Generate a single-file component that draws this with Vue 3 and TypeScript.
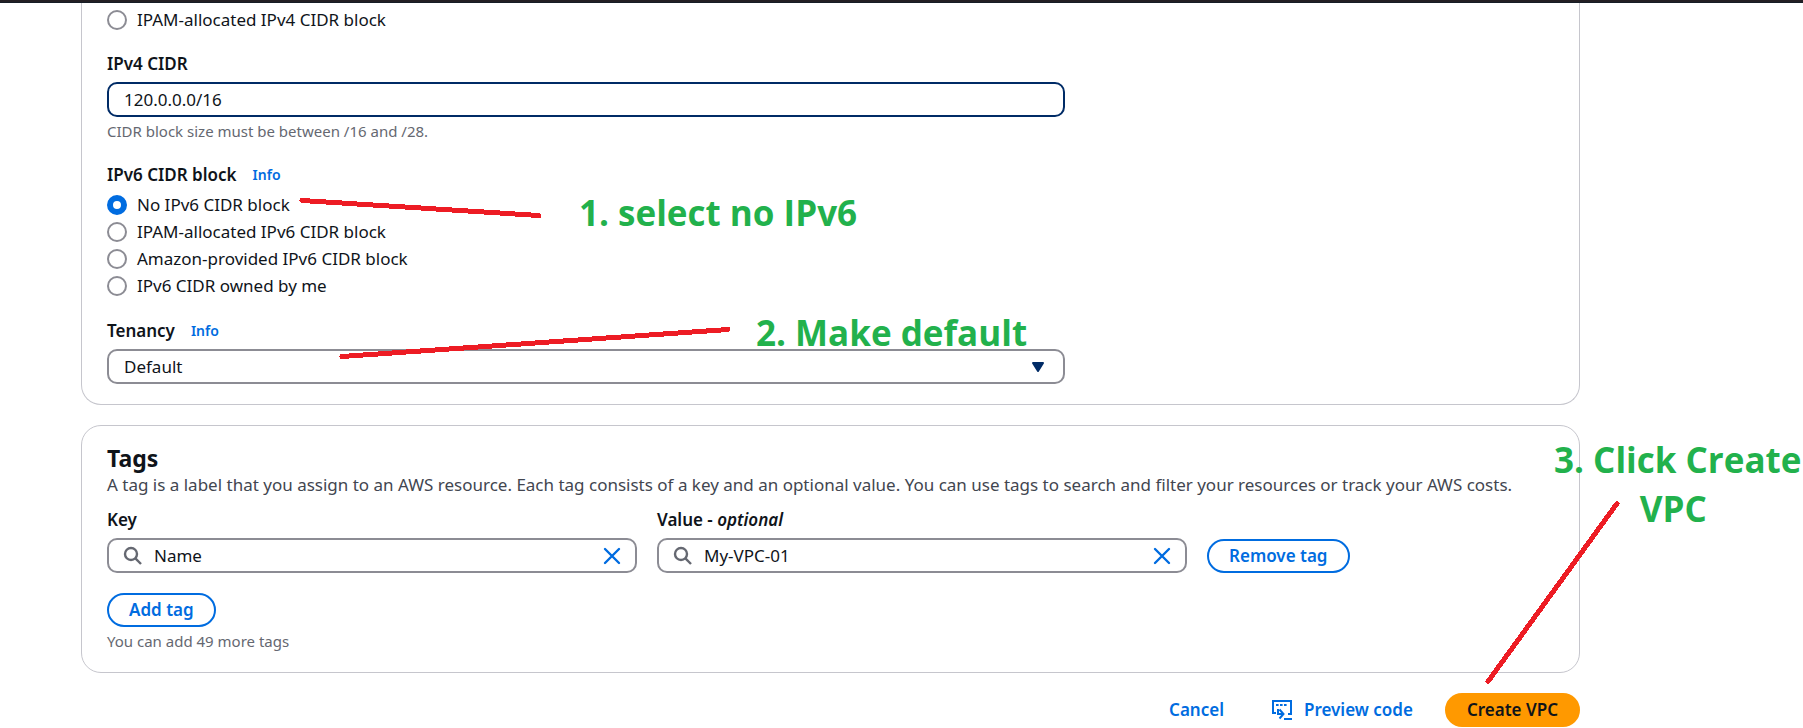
<script setup lang="ts">
import { ref } from 'vue'

const ipv4Source = ref('manual')
const ipv4Cidr = ref('120.0.0.0/16')
const ipv6Source = ref('none')
const tenancy = ref('default')
const tagKey = ref('Name')
const tagValue = ref('My-VPC-01')

const ipv6Options = [
  { value: 'none', label: 'No IPv6 CIDR block' },
  { value: 'ipam', label: 'IPAM-allocated IPv6 CIDR block' },
  { value: 'amazon', label: 'Amazon-provided IPv6 CIDR block' },
  { value: 'owned', label: 'IPv6 CIDR owned by me' },
]
</script>

<template>
  <div class="page">
    <div class="topbar"></div>
    <main class="content">
      <section class="panel settings">
        <label class="radio">
          <input v-model="ipv4Source" type="radio" name="ipv4" value="ipam" />
          <span>IPAM-allocated IPv4 CIDR block</span>
        </label>

        <div class="field">
          <label class="label" for="cidr">IPv4 CIDR</label>
          <input id="cidr" v-model="ipv4Cidr" class="box focused" type="text" />
          <p class="hint">CIDR block size must be between /16 and /28.</p>
        </div>

        <div class="field" role="radiogroup" aria-labelledby="ipv6-label">
          <div class="label">
            <span id="ipv6-label">IPv6 CIDR block</span>
            <a class="info" href="#ipv6">Info</a>
          </div>
          <div class="options">
            <label v-for="o in ipv6Options" :key="o.value" class="radio">
              <input v-model="ipv6Source" type="radio" name="ipv6" :value="o.value" />
              <span>{{ o.label }}</span>
            </label>
          </div>
        </div>

        <div class="field">
          <div class="label">
            <label for="tenancy">Tenancy</label>
            <a class="info" href="#tenancy">Info</a>
          </div>
          <div class="select">
            <select id="tenancy" v-model="tenancy" class="box">
              <option value="default">Default</option>
              <option value="dedicated">Dedicated</option>
            </select>
            <svg class="caret" viewBox="0 0 14 12" aria-hidden="true">
              <path d="M2 2h10L7 10z" />
            </svg>
          </div>
        </div>
      </section>

      <section class="panel tags">
        <h2>Tags</h2>
        <p class="description">
          A tag is a label that you assign to an AWS resource. Each tag consists of a key and an optional value. You can use tags to search and filter your resources or track your AWS costs.
        </p>
        <div class="tag-row">
          <div>
            <label class="label" for="tag-key">Key</label>
            <div class="search">
              <svg class="lens" viewBox="0 0 20 20" aria-hidden="true">
                <circle cx="8" cy="8" r="6" />
                <path d="M12.4 12.4 18 18" />
              </svg>
              <input id="tag-key" v-model="tagKey" type="text" />
              <button type="button" class="clear" aria-label="Clear key" @click="tagKey = ''">
                <svg viewBox="0 0 18 18"><path d="m2 2 14 14M16 2 2 16" /></svg>
              </button>
            </div>
          </div>
          <div>
            <label class="label" for="tag-value">Value - <i>optional</i></label>
            <div class="search">
              <svg class="lens" viewBox="0 0 20 20" aria-hidden="true">
                <circle cx="8" cy="8" r="6" />
                <path d="M12.4 12.4 18 18" />
              </svg>
              <input id="tag-value" v-model="tagValue" type="text" />
              <button type="button" class="clear" aria-label="Clear value" @click="tagValue = ''">
                <svg viewBox="0 0 18 18"><path d="m2 2 14 14M16 2 2 16" /></svg>
              </button>
            </div>
          </div>
          <button type="button" class="btn">Remove tag</button>
        </div>
        <button type="button" class="btn add">Add tag</button>
        <p class="hint">You can add 49 more tags</p>
      </section>

      <footer class="actions">
        <button type="button" class="btn link">Cancel</button>
        <button type="button" class="btn link with-icon">
          <svg class="code" viewBox="0 0 20 20" aria-hidden="true">
            <path class="stroke" d="M4 13H1V1h18v13h-3" />
            <path d="M4 4h2.6v2H4zM8 4h2.6v2H8zM12 4h2.6v2H12zM12 18h8v2h-8z" />
            <path class="stroke" d="M6 9v5h5M7.500 9.500l4 4.500-4 4.500" />
          </svg>
          Preview code
        </button>
        <button type="button" class="btn primary">Create VPC</button>
      </footer>
    </main>

    <svg class="marks" width="1803" height="728" aria-hidden="true">
      <path d="M302 200.500 539 215.500M342 356.500 728 329.500M1617 503.500 1488 681.500" />
    </svg>
    <p class="note note-1">1. select no IPv6</p>
    <p class="note note-2">2. Make default</p>
    <p class="note note-3">3. Click Create<br />VPC&nbsp;</p>
  </div>
</template>

<style>
body {
  margin: 0;
  overflow: hidden;
}
</style>

<style scoped>
* {
  box-sizing: border-box;
}

.page {
  position: relative;
  min-height: 100vh;
  background: #fff;
  color: #0f141a;
  font: 17px/24px "Noto Sans", "Open Sans", sans-serif;
}

.topbar {
  height: 3px;
  background: #231f23;
  border-bottom: 1px solid #161d26;
}

.content {
  max-width: 1580px;
  padding-left: 81px;
}

.panel {
  padding: 0 25px;
  border: 1px solid #c6c6cd;
  border-radius: 20px;
}

.settings {
  padding-top: 5px;
  padding-bottom: 20px;
  border-top: 0;
  border-radius: 0 0 20px 20px;
}

.field {
  max-width: 958px;
  margin-top: 20px;
}

.label {
  display: flex;
  align-items: center;
  gap: 16px;
  height: 24px;
  margin-bottom: 6px;
  font-weight: 600;
  white-space: pre;
}

.info {
  font-size: 14px;
  color: #006ce0;
  text-decoration: none;
}

label.label {
  gap: 0;
}

.options {
  display: grid;
  gap: 3px;
  padding-bottom: 1px;
}

.radio {
  display: flex;
  align-items: center;
  gap: 10px;
  height: 24px;
}

.radio input {
  appearance: none;
  width: 20px;
  height: 20px;
  margin: 0;
  border: 2px solid #8c8c94;
  border-radius: 50%;
  background: #fff;
}

.radio input:checked {
  border: 6px solid #006ce0;
}

.box {
  display: block;
  appearance: none;
  width: 100%;
  height: 35px;
  padding: 0 15px;
  border: 2px solid #8c8c94;
  border-radius: 10px;
  background: #fff;
  color: inherit;
  font: inherit;
}

.focused {
  border-color: #002b66;
}

.hint {
  margin: 2px 0 0;
  font-size: 15px;
  color: #656871;
}

.select {
  position: relative;
}

.caret {
  position: absolute;
  top: 12px;
  right: 20px;
  width: 14px;
  height: 12px;
  fill: #002b66;
  stroke: #002b66;
  stroke-width: 2;
  stroke-linejoin: round;
}

.tags {
  margin-top: 20px;
  padding-top: 17px;
  padding-bottom: 19px;
}

h2 {
  margin: 0;
  font-size: 23px;
  line-height: 30px;
  font-weight: 700;
}

.description {
  margin: 0 0 11px;
  color: #424650;
}

.tag-row {
  display: grid;
  grid-template-columns: 530fr 530fr 347fr;
  align-items: end;
  gap: 20px;
}

.search {
  display: flex;
  align-items: center;
  height: 35px;
  padding: 0 14px;
  border: 2px solid #8c8c94;
  border-radius: 10px;
}

.search input {
  flex: 1;
  min-width: 0;
  padding: 0 11px;
  border: 0;
  outline: 0;
  background: none;
  color: inherit;
  font: inherit;
}

.lens {
  width: 20px;
  height: 20px;
  fill: none;
  stroke: #656871;
  stroke-width: 2.4;
}

.clear {
  display: flex;
  padding: 0;
  border: 0;
  background: none;
}

.clear svg {
  width: 18px;
  height: 18px;
  stroke: #006ce0;
  stroke-width: 2.4;
  stroke-linecap: round;
}

.btn {
  display: inline-flex;
  align-items: center;
  justify-self: start;
  height: 34px;
  padding: 0 20px;
  border: 2px solid #006ce0;
  border-radius: 20px;
  background: #fff;
  color: #006ce0;
  font: inherit;
  font-weight: 600;
}

.add {
  display: flex;
  margin-top: 20px;
}

.actions {
  display: flex;
  justify-content: flex-end;
  gap: 10px;
  margin-top: 20px;
}

.link {
  border-color: transparent;
  background: none;
}

.with-icon {
  gap: 12px;
  padding-left: 14px;
}

.code {
  width: 20px;
  height: 20px;
  fill: #006ce0;
}

.code .stroke {
  fill: none;
  stroke: #006ce0;
  stroke-width: 2;
}

.primary {
  border-color: #ff9900;
  background: #ff9900;
  color: #0f141a;
}

.marks {
  position: absolute;
  top: 0;
  left: 0;
  pointer-events: none;
  fill: none;
  stroke: #ed1c24;
  stroke-width: 5;
  stroke-linecap: round;
  shape-rendering: crispEdges;
}

.note {
  position: absolute;
  margin: 0;
  color: #22b14c;
  font: 700 35px/49px "Open Sans", "Noto Sans", sans-serif;
  text-align: center;
  white-space: nowrap;
}

.note-1 {
  top: 188px;
  left: 579px;
}

.note-2 {
  top: 308px;
  left: 756px;
}

.note-3 {
  top: 435px;
  left: 1554px;
}
</style>
